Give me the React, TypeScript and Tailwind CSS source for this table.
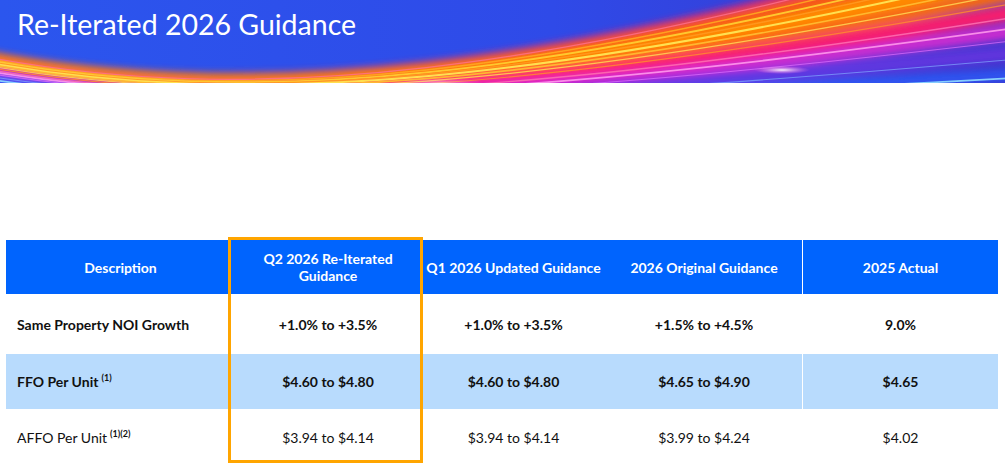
import React from 'react';

// Light streaks in the banner: curves that fan out towards the upper right.
// k runs 0 (top edge of the band) to 1 (bottom edge).
const curve = (k: number) =>
  `M -20 ${55 + 25 * k} C 250 ${108 + 12 * k}, 550 ${74 + 32 * k}, 1030 ${-70 + 160 * k}`;

const glows = [
  { k: 0.02, color: '#ff1f5a', w: 12, o: 0.8 },
  { k: 0.12, color: '#ff5a10', w: 16, o: 0.95 },
  { k: 0.26, color: '#ff8a00', w: 18, o: 1 },
  { k: 0.38, color: '#ff6a10', w: 14, o: 0.95 },
  { k: 0.5, color: '#ff1f6a', w: 16, o: 0.95 },
  { k: 0.62, color: '#e02ad0', w: 14, o: 0.85 },
  { k: 0.76, color: '#7a30e8', w: 14, o: 0.6 },
  { k: 0.9, color: '#2a60ff', w: 12, o: 0.7 },
];

const lines = [
  { k: 0.03, color: '#ff7090', w: 1.2, o: 0.8 },
  { k: 0.09, color: '#ffa820', w: 1.4, o: 0.9 },
  { k: 0.15, color: '#ffcc30', w: 1.8, o: 0.95 },
  { k: 0.2, color: '#ff9a20', w: 1.4, o: 0.9 },
  { k: 0.25, color: '#ffe050', w: 2, o: 1 },
  { k: 0.31, color: '#ffbb30', w: 1.6, o: 0.95 },
  { k: 0.37, color: '#ffd050', w: 1.3, o: 0.9 },
  { k: 0.44, color: '#ff8a30', w: 1.2, o: 0.85 },
  { k: 0.53, color: '#ff70b0', w: 1.4, o: 0.85 },
  { k: 0.6, color: '#ff98ec', w: 1.8, o: 0.9 },
  { k: 0.68, color: '#e070ff', w: 1.2, o: 0.7 },
  { k: 0.8, color: '#80a8ff', w: 1.2, o: 0.7 },
  { k: 0.92, color: '#90dcff', w: 1.8, o: 0.9 },
];

const Banner = () => (
  <div className="relative h-[83px] w-full overflow-hidden">
    <svg className="absolute inset-0 h-full w-full" viewBox="0 0 1005 83" preserveAspectRatio="none">
      <defs>
        <linearGradient id="sky" x1="0" y1="0" x2="1" y2="0">
          <stop offset="0" stopColor="#2b56ee" />
          <stop offset="0.55" stopColor="#2f4ae8" />
          <stop offset="1" stopColor="#3a36cc" />
        </linearGradient>
        <filter id="glow" x="-10%" y="-80%" width="120%" height="260%">
          <feGaussianBlur stdDeviation="3.5" />
        </filter>
        <filter id="soft" x="-10%" y="-50%" width="120%" height="200%">
          <feGaussianBlur stdDeviation="0.5" />
        </filter>
        <radialGradient id="flare" cx="0.5" cy="0.5" r="0.5">
          <stop offset="0" stopColor="#ffffff" stopOpacity="0.95" />
          <stop offset="1" stopColor="#ff80e0" stopOpacity="0" />
        </radialGradient>
      </defs>
      <rect width="1005" height="83" fill="url(#sky)" />
      <g filter="url(#glow)">
        {glows.map((s, i) => (
          <path key={`g${i}`} d={curve(s.k)} stroke={s.color} strokeWidth={s.w} fill="none" opacity={s.o} />
        ))}
      </g>
      <g filter="url(#soft)">
        {lines.map((s, i) => (
          <path key={`s${i}`} d={curve(s.k)} stroke={s.color} strokeWidth={s.w} fill="none" opacity={s.o} />
        ))}
      </g>
      <ellipse cx="782" cy="70" rx="28" ry="4" fill="url(#flare)" />
      <ellipse cx="440" cy="83" rx="45" ry="5" fill="url(#flare)" opacity="0.5" />
    </svg>
    <h1 className="relative pl-[17px] pt-[5px] font-['Lato','Liberation_Sans',sans-serif] text-[28.5px] leading-[38px] text-white">
      Re-Iterated 2026 Guidance
    </h1>
  </div>
);

const Sup = ({ children }: { children: React.ReactNode }) => (
  <sup className="relative top-[-6px] ml-[3px] text-[9px] font-bold">{children}</sup>
);

type Row = { label: React.ReactNode; values: string[]; bold: boolean; shaded: boolean; h: string };

const rows: Row[] = [
  {
    label: 'Same Property NOI Growth',
    values: ['+1.0% to +3.5%', '+1.0% to +3.5%', '+1.5% to +4.5%', '9.0%'],
    bold: true,
    shaded: false,
    h: 'h-[60px]',
  },
  {
    label: (
      <>
        FFO Per Unit<Sup>(1)</Sup>
      </>
    ),
    values: ['$4.60 to $4.80', '$4.60 to $4.80', '$4.65 to $4.90', '$4.65'],
    bold: true,
    shaded: true,
    h: 'h-[55px]',
  },
  {
    label: (
      <>
        AFFO Per Unit<Sup>(1)(2)</Sup>
      </>
    ),
    values: ['$3.94 to $4.14', '$3.94 to $4.14', '$3.99 to $4.24', '$4.02'],
    bold: false,
    shaded: false,
    h: 'h-[56px]',
  },
];

const headers = ['Q2 2026 Re-Iterated Guidance', 'Q1 2026 Updated Guidance', '2026 Original Guidance', '2025 Actual'];

export default function App() {
  return (
    <div className="flex h-[468px] w-[1005px] flex-col overflow-hidden bg-white font-['Lato','Liberation_Sans',sans-serif]">
      <Banner />
      <div className="relative mt-[157px] ml-[6px] w-[992px]">
        <div className="grid grid-cols-[229px_186px_185px_196px_196px]">
          {/* header */}
          <div className="flex h-[54px] items-center justify-center bg-[#0064fe] text-[14px] font-bold text-white">
            Description
          </div>
          {headers.map((h, i) => (
            <div
              key={h}
              className={`flex h-[54px] items-center justify-center bg-[#0064fe] text-center text-[14px] font-bold leading-[17px] text-white ${
                i === 0 ? 'px-[22px]' : ''
              } ${i === 3 ? 'border-l border-white' : ''}`}
            >
              {h}
            </div>
          ))}
          {/* body */}
          {rows.map((r, ri) => (
            <React.Fragment key={ri}>
              <div
                className={`flex ${r.h} items-center pl-[11px] text-[14px] text-[#111] ${r.bold ? 'font-bold' : 'font-normal'} ${
                  r.shaded ? 'bg-[#b8dbfd]' : 'bg-white'
                }`}
              >
                <span>{r.label}</span>
              </div>
              {r.values.map((v, vi) => (
                <div
                  key={vi}
                  className={`flex ${r.h} items-center justify-center text-[14px] text-[#111] ${
                    r.bold ? 'font-bold' : 'font-normal'
                  } ${r.shaded ? 'bg-[#b8dbfd]' : 'bg-white'} ${vi === 3 ? 'border-l border-white' : ''}`}
                >
                  {v}
                </div>
              ))}
            </React.Fragment>
          ))}
        </div>
        {/* highlight around the current guidance column */}
        <div className="pointer-events-none absolute top-[-3px] left-[222px] h-[226px] w-[195px] border-[3px] border-[#ffa500]" />
      </div>
    </div>
  );
}
